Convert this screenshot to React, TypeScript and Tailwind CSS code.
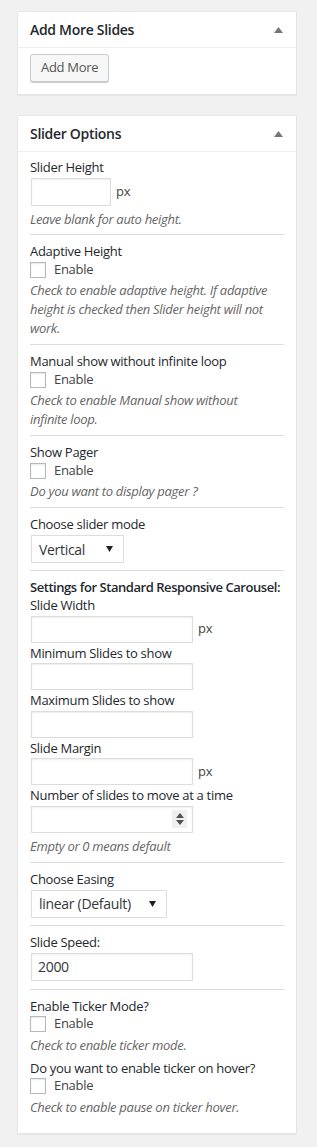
import React from "react";

const font = { fontFamily: '"Open Sans", "Noto Sans", sans-serif' };

function Panel({ title, children }: { title: string; children: React.ReactNode }) {
  return (
    <div className="ml-[17px] w-[280px] bg-white border border-[#e5e5e5] shadow-[0_1px_1px_rgba(0,0,0,0.04)]">
      <div className="h-[36px] flex items-center justify-between pl-[12px] pr-[13px] border-b border-[#eeeeee]">
        <h2 className="text-[14px] font-semibold text-[#23282d]">{title}</h2>
        <svg width="9" height="6" viewBox="0 0 9 6" className="mt-[1px]">
          <path d="M4.5 0 L9 6 L0 6 Z" fill="#72777c" />
        </svg>
      </div>
      {children}
    </div>
  );
}

function TextInput({ width, height = "h-[27px]", value, px, spinner }: { width: string; height?: string; value?: string; px?: boolean; spinner?: boolean }) {
  return (
    <div className="flex items-center">
      <div className={`${width} ${height} m-[1px] border border-[#dddddd] shadow-[inset_0_1px_2px_rgba(0,0,0,0.07)] flex items-center px-[6px] text-[14px] text-[#32373c]`}>
        <span className="flex-1">{value}</span>
        {spinner && (
          <span className="w-[15px] h-[18px] bg-[#f0f0f0] flex flex-col items-center justify-center gap-[2px] -mr-[1px]">
            <svg width="8" height="5" viewBox="0 0 8 5"><path d="M4 0 L8 5 L0 5 Z" fill="#505050" /></svg>
            <svg width="8" height="5" viewBox="0 0 8 5"><path d="M0 0 L8 0 L4 5 Z" fill="#505050" /></svg>
          </span>
        )}
      </div>
      {px && <span className="ml-[4px] text-[13px] text-[#444]">px</span>}
    </div>
  );
}

function Select({ width, value }: { width: string; value: string }) {
  return (
    <div className={`${width} h-[28px] m-[1px] border border-[#dddddd] flex items-center justify-between pl-[7px] pr-[10px] text-[14px] text-[#32373c]`}>
      <span>{value}</span>
      <svg width="7" height="6" viewBox="0 0 7 6"><path d="M0 0 L7 0 L3.5 6 Z" fill="#222" /></svg>
    </div>
  );
}

function Checkbox() {
  return (
    <div className="flex items-center h-[17px] mb-[1px]">
      <span className="w-[16px] h-[16px] border border-[#b4b9be] bg-white shadow-[inset_0_1px_2px_rgba(0,0,0,0.1)]" />
      <span className="ml-[8px] text-[13px] text-[#444]">Enable</span>
    </div>
  );
}

function Label({ children, bold, tight }: { children: React.ReactNode; bold?: boolean; tight?: boolean }) {
  const lh = bold ? "leading-[18px] font-semibold whitespace-nowrap tracking-[-0.45px]" : tight ? "leading-[18.5px]" : "leading-[19px]";
  return <div className={`text-[13px] text-[#23282d] ${lh}`}>{children}</div>;
}

function Desc({ children }: { children: React.ReactNode }) {
  return <p className="text-[13px] leading-[19px] italic text-[#666] mt-[3px]">{children}</p>;
}

function Section({ children, last, first }: { children: React.ReactNode; last?: boolean; first?: boolean }) {
  return (
    <div className={`${first ? "pt-[6px] pb-[5px]" : "pt-[7px] pb-[6px]"} ${last ? "" : "border-b border-[#dddddd]"}`}>
      {children}
    </div>
  );
}

export default function App() {
  return (
    <div className="min-h-[1147px] bg-[#f1f1f1] pt-[11px] pb-[14px] tracking-[-0.3px]" style={font}>
      <Panel title="Add More Slides">
        <div className="px-[12px] pt-[6px] pb-[12px]">
          <button className="h-[28px] px-[10px] text-[13px] text-[#555] bg-[#f7f7f7] border border-[#cccccc] rounded-[3px] shadow-[0_1px_0_#cccccc]">
            Add More
          </button>
        </div>
      </Panel>

      <div className="h-[20px]" />

      <Panel title="Slider Options">
        <div className="px-[12px] pb-[10px]">
          <Section first>
            <Label>Slider Height</Label>
            <TextInput width="w-[80px]" height="h-[28px]" px />
            <Desc>Leave blank for auto height.</Desc>
          </Section>
          <Section>
            <Label>Adaptive Height</Label>
            <Checkbox />
            <Desc>Check to enable adaptive height. If adaptive height is checked then Slider height will not work.</Desc>
          </Section>
          <Section>
            <Label>Manual show without infinite loop</Label>
            <Checkbox />
            <Desc>
              Check to enable Manual show without
              <br />
              infinite loop.
            </Desc>
          </Section>
          <Section>
            <Label>Show Pager</Label>
            <Checkbox />
            <Desc>Do you want to display pager ?</Desc>
          </Section>
          <Section>
            <Label>Choose slider mode</Label>
            <Select width="w-[93px]" value="Vertical" />
          </Section>
          <Section>
            <Label bold>Settings for Standard Responsive Carousel:</Label>
            <Label tight>Slide Width</Label>
            <TextInput width="w-[162px]" px />
            <Label tight>Minimum Slides to show</Label>
            <TextInput width="w-[162px]" />
            <Label tight>Maximum Slides to show</Label>
            <TextInput width="w-[162px]" />
            <Label tight>Slide Margin</Label>
            <TextInput width="w-[162px]" px />
            <Label tight>Number of slides to move at a time</Label>
            <TextInput width="w-[162px]" spinner />
            <Desc>Empty or 0 means default</Desc>
          </Section>
          <Section>
            <Label>Choose Easing</Label>
            <Select width="w-[136px]" value="linear (Default)" />
          </Section>
          <Section>
            <Label>Slide Speed:</Label>
            <TextInput width="w-[162px]" height="h-[28px]" value="2000" />
            <div className="h-[1px]" />
          </Section>
          <Section last>
            <Label>Enable Ticker Mode?</Label>
            <Checkbox />
            <Desc>Check to enable ticker mode.</Desc>
            <div className="h-[4px]" />
            <Label>Do you want to enable ticker on hover?</Label>
            <Checkbox />
            <Desc>Check to enable pause on ticker hover.</Desc>
          </Section>
        </div>
      </Panel>
    </div>
  );
}
